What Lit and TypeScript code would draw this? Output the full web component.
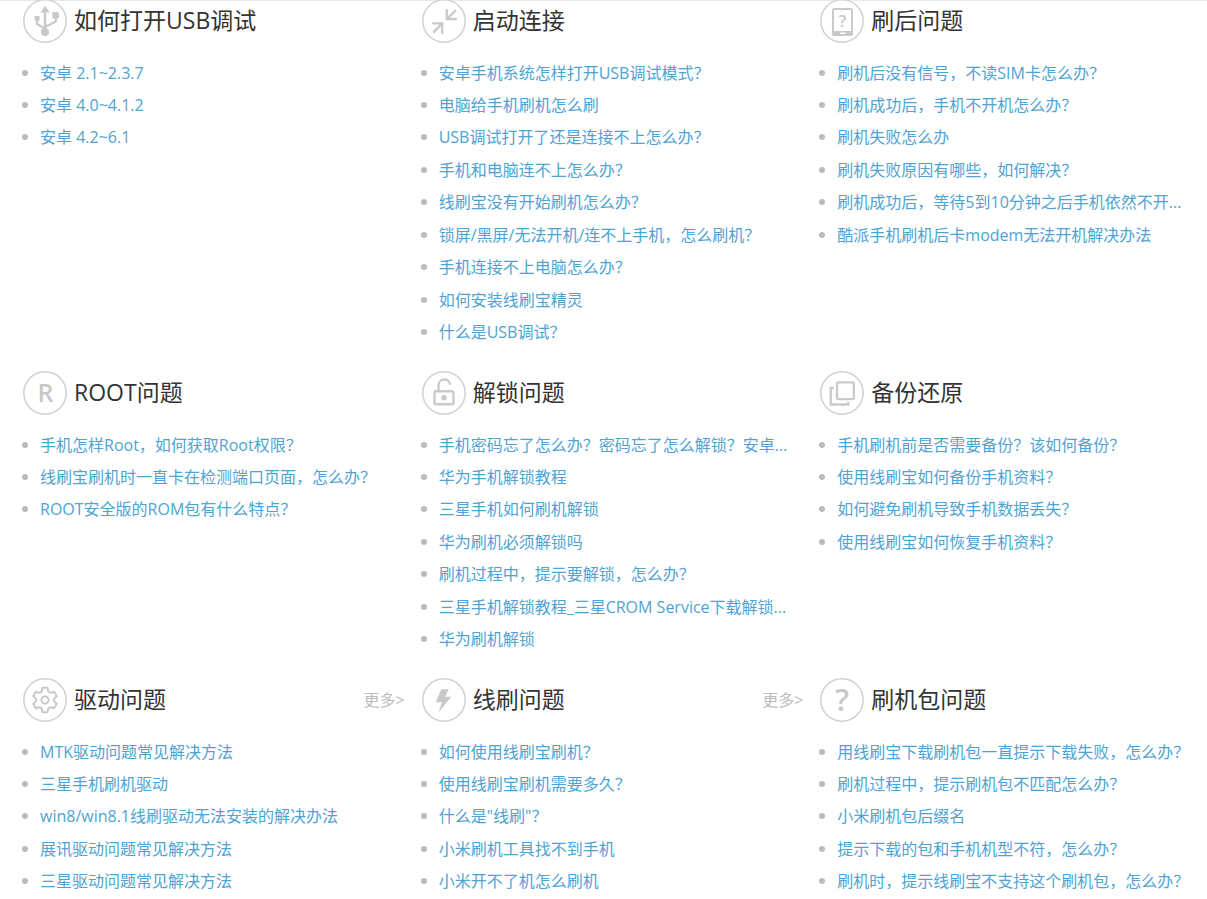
import { LitElement, html, svg, css, nothing, type TemplateResult } from "lit";
import { customElement, property } from "lit/decorators.js";

type IconName = "usb" | "connect" | "phone" | "root" | "unlock" | "backup" | "gear" | "bolt" | "question";

interface Topic {
  icon: IconName;
  title: string;
  more?: boolean;
  links: string[];
}

const TOPICS: Topic[] = [
  { icon: "usb", title: "如何打开USB调试", links: ["安卓 2.1~2.3.7", "安卓 4.0~4.1.2", "安卓 4.2~6.1"] },
  {
    icon: "connect",
    title: "启动连接",
    links: [
      "安卓手机系统怎样打开USB调试模式？",
      "电脑给手机刷机怎么刷",
      "USB调试打开了还是连接不上怎么办？",
      "手机和电脑连不上怎么办？",
      "线刷宝没有开始刷机怎么办？",
      "锁屏/黑屏/无法开机/连不上手机，怎么刷机？",
      "手机连接不上电脑怎么办？",
      "如何安装线刷宝精灵",
      "什么是USB调试？",
    ],
  },
  {
    icon: "phone",
    title: "刷后问题",
    links: [
      "刷机后没有信号，不读SIM卡怎么办？",
      "刷机成功后，手机不开机怎么办？",
      "刷机失败怎么办",
      "刷机失败原因有哪些，如何解决？",
      "刷机成功后，等待5到10分钟之后手机依然不开...",
      "酷派手机刷机后卡modem无法开机解决办法",
    ],
  },
  {
    icon: "root",
    title: "ROOT问题",
    links: [
      "手机怎样Root，如何获取Root权限？",
      "线刷宝刷机时一直卡在检测端口页面，怎么办？",
      "ROOT安全版的ROM包有什么特点？",
    ],
  },
  {
    icon: "unlock",
    title: "解锁问题",
    links: [
      "手机密码忘了怎么办？密码忘了怎么解锁？安卓...",
      "华为手机解锁教程",
      "三星手机如何刷机解锁",
      "华为刷机必须解锁吗",
      "刷机过程中，提示要解锁，怎么办？",
      "三星手机解锁教程_三星CROM Service下载解锁...",
      "华为刷机解锁",
    ],
  },
  {
    icon: "backup",
    title: "备份还原",
    links: [
      "手机刷机前是否需要备份？该如何备份？",
      "使用线刷宝如何备份手机资料？",
      "如何避免刷机导致手机数据丢失？",
      "使用线刷宝如何恢复手机资料？",
    ],
  },
  {
    icon: "gear",
    title: "驱动问题",
    more: true,
    links: [
      "MTK驱动问题常见解决方法",
      "三星手机刷机驱动",
      "win8/win8.1线刷驱动无法安装的解决办法",
      "展讯驱动问题常见解决方法",
      "三星驱动问题常见解决方法",
    ],
  },
  {
    icon: "bolt",
    title: "线刷问题",
    more: true,
    links: [
      "如何使用线刷宝刷机？",
      "使用线刷宝刷机需要多久？",
      "什么是\"线刷\"？",
      "小米刷机工具找不到手机",
      "小米开不了机怎么刷机",
    ],
  },
  {
    icon: "question",
    title: "刷机包问题",
    links: [
      "用线刷宝下载刷机包一直提示下载失败，怎么办？",
      "刷机过程中，提示刷机包不匹配怎么办？",
      "小米刷机包后缀名",
      "提示下载的包和手机机型不符，怎么办？",
      "刷机时，提示线刷宝不支持这个刷机包，怎么办？",
    ],
  },
];

/** Outline of a six-toothed cog centred on (22, 22). */
function cogPath(): string {
  const at = (radius: number, degrees: number) => {
    const a = (degrees * Math.PI) / 180;
    return `${(22 + radius * Math.cos(a)).toFixed(2)} ${(22 + radius * Math.sin(a)).toFixed(2)}`;
  };
  let d = "";
  for (let k = 0; k < 6; k++) {
    const mid = -90 + k * 60;
    d += `${k ? "L" : "M"}${at(9.6, mid - 19)}L${at(12.4, mid - 12)}L${at(12.4, mid + 12)}L${at(9.6, mid + 19)}`;
    d += `Q${at(8.4, mid + 30)} ${at(9.6, mid + 41)}`;
  }
  return d + "Z";
}

const GLYPHS: Record<IconName, TemplateResult> = {
  usb: svg`
    <path class="fill" d="M22 7l4.7 6.5h-3.5v16h-2.4v-16h-3.5z M29.3 13.2h6.6v6h-6.6z M11.7 17h4.8v4.8h-4.8z"/>
    <path class="line" stroke-width="2.2" d="M14 21v4l8 4.6 M32.8 18.500v4L22 28"/>
    <circle class="fill" cx="22" cy="33" r="4"/>`,
  connect: svg`
    <path class="line" stroke-width="2.4" d="M24.800 10.300v9.700h10 M25 19.800l9-8.800 M10.300 24.400h9.900v10.300 M20 24.600l-8.800 9"/>`,
  phone: svg`
    <rect class="line" stroke-width="2" x="13" y="10" width="19" height="26" rx="1.500"/>
    <path class="fill" fill-rule="evenodd" d="M12.500 32h20v4.500h-20z M20 33.400v2.200h5.500v-2.200z"/>
    <text x="22.500" y="28" font-size="17">?</text>`,
  root: svg`<text x="22.500" y="31" font-size="25">R</text>`,
  unlock: svg`
    <rect class="line" stroke-width="2.400" x="12.500" y="20.200" width="19" height="13" rx="1.500"/>
    <path class="line" stroke-width="2.400" d="M16.500 20v-6a6 6 0 0 1 6-5.600a6 6 0 0 1 5.600 5.400"/>
    <circle class="fill" cx="22" cy="26.700" r="2.700"/>`,
  backup: svg`
    <rect class="line" stroke-width="2.300" x="17" y="11.400" width="16.800" height="16.800" rx="1"/>
    <path class="line" stroke-width="2.300" d="M13.800 17h-3v16.500h17.500v-2.800"/>`,
  gear: svg`
    <path class="line" stroke-width="2" stroke-linejoin="round" d=${cogPath()}/>
    <circle class="line" stroke-width="2" cx="22" cy="22" r="3.600"/>`,
  bolt: svg`<path class="fill" d="M19.300 11.300h7.400l-3.400 7.400h6L16.300 34.700l3.700-10.400h-6.300z"/>`,
  question: svg`<text x="22" y="33" font-size="31">?</text>`,
};

@customElement("topic-icon")
export class TopicIcon extends LitElement {
  static styles = css`
    :host {
      display: block;
      flex: none;
    }
    .badge {
      display: block;
      width: 44px;
      height: 44px;
    }
    .ring {
      fill: #fff;
      stroke: #d0d0d0;
      stroke-width: 1.5;
    }
    .fill {
      fill: #c8c8c8;
    }
    .line {
      fill: none;
      stroke: #cacaca;
    }
    text {
      fill: #c8c8c8;
      font-family: "Open Sans", "Noto Sans", sans-serif;
      font-weight: 600;
      text-anchor: middle;
    }
  `;

  @property() name: IconName = "usb";

  render() {
    return html`<svg class="badge" viewBox="0 0 44 44" aria-hidden="true">
      <circle class="ring" cx="22" cy="22" r="21.2" />
      ${GLYPHS[this.name]}
    </svg>`;
  }
}

@customElement("topic-card")
export class TopicCard extends LitElement {
  static styles = css`
    :host {
      display: block;
      min-width: 0;
    }
    .head {
      display: flex;
      align-items: center;
      gap: 7px;
      padding: 0 0 14px 1px;
    }
    .title {
      flex: 1;
      margin: 0;
      padding-bottom: 2px;
      font-size: 23px;
      line-height: 32px;
      font-weight: 400;
      color: #333;
      white-space: nowrap;
    }
    .more {
      color: #bbb;
      font-size: 16px;
      line-height: 32px;
      text-decoration: none;
    }
    .list {
      margin: 0;
      padding: 0;
      list-style: none;
    }
    .item {
      display: flex;
      align-items: center;
      gap: 12px;
    }
    .item:nth-child(2n + 3) {
      padding-bottom: 1px;
    }
    .item::before {
      content: "";
      flex: none;
      width: 6px;
      height: 6px;
      border-radius: 50%;
      background: #bbb;
    }
    .link {
      overflow: hidden;
      text-overflow: ellipsis;
      white-space: nowrap;
      font-size: 16px;
      line-height: 32px;
      color: #4fa3d3;
      text-decoration: none;
    }
    .link:hover,
    .more:hover {
      text-decoration: underline;
    }
  `;

  @property({ attribute: false }) topic!: Topic;

  render() {
    const { icon, title, more, links } = this.topic;
    return html`
      <header class="head">
        <topic-icon .name=${icon}></topic-icon>
        <h2 class="title">${title}</h2>
        ${more ? html`<a class="more" href="#">更多&gt;</a>` : nothing}
      </header>
      <ul class="list">
        ${links.map((text) => html`<li class="item"><a class="link" href="#">${text}</a></li>`)}
      </ul>
    `;
  }
}

@customElement("app-root")
export class AppRoot extends LitElement {
  static styles = css`
    :host {
      display: block;
      border-top: 1px solid #e8e8e8;
      background: #fff;
      font-family: "Open Sans", "Noto Sans CJK SC", sans-serif;
    }
    .topics {
      display: grid;
      grid-template-columns: repeat(3, minmax(0, 1fr));
      gap: 22px 16px;
      margin-top: -2px;
      padding: 0 5px 0 22px;
    }
  `;

  render() {
    return html`<main class="topics" lang="zh-CN">
      ${TOPICS.map((topic) => html`<topic-card .topic=${topic}></topic-card>`)}
    </main>`;
  }
}
